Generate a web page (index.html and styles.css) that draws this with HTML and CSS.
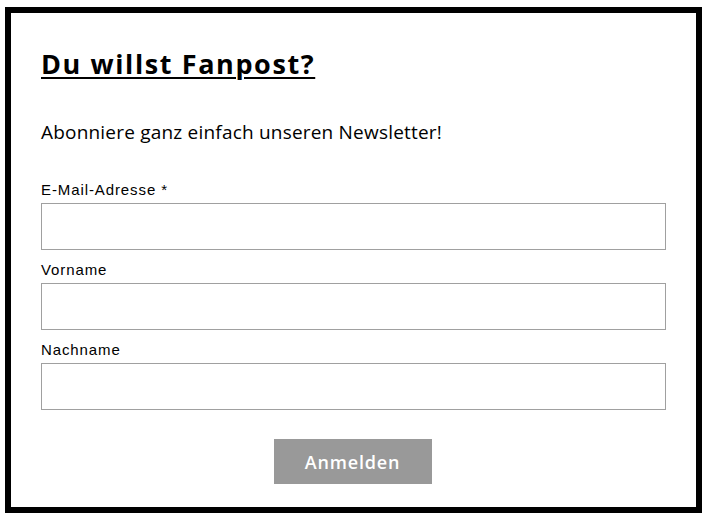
FILE: index.html
```html
<!DOCTYPE html>
<html lang="de">
<head>
<meta charset="utf-8">
<link rel="stylesheet" href="styles.css">
</head>
<body>
<div class="box">
  <h2 class="title">Du willst Fanpost?</h2>
  <p class="intro">Abonniere ganz einfach unseren Newsletter!</p>
  <form class="form">
    <label class="field">
      <span class="label">E-Mail-Adresse *</span>
      <input class="input" type="email">
    </label>
    <label class="field">
      <span class="label">Vorname</span>
      <input class="input" type="text">
    </label>
    <label class="field">
      <span class="label">Nachname</span>
      <input class="input" type="text">
    </label>
    <div class="actions">
      <button class="button" type="button">Anmelden</button>
    </div>
  </form>
</div>
</body>
</html>
```

FILE: styles.css
```css
* { box-sizing: border-box; }
html, body { margin: 0; padding: 0; background: #fff; }
body { font-family: "Open Sans", "Noto Sans", sans-serif; color: #000; }
.box {
  margin: 7px 6px 0 5px;
  width: 697px;
  height: 506px;
  border: 6px solid #000;
  padding: 33px 30px 0 30px;
}
.title {
  margin: 0;
  font-size: 27px;
  line-height: 36px;
  font-weight: 700;
  text-decoration: underline;
  text-decoration-thickness: 2px;
  text-underline-offset: 3px;
  letter-spacing: 1.6px;
}
.intro {
  margin: 38px 0 0 0;
  font-size: 19px;
  line-height: 24px;
  letter-spacing: 0.2px;
}
.form { margin-top: 36px; display: flex; flex-direction: column; }
.field { display: flex; flex-direction: column; margin-bottom: 10px; }
.field:last-of-type { margin-bottom: 0; }
.label {
  font-family: "Liberation Sans", Arial, sans-serif;
  font-size: 15px;
  line-height: 20px;
  letter-spacing: 0.9px;
  margin-bottom: 3px;
}
.input {
  display: block;
  width: 100%;
  height: 47px;
  border: 1px solid #a0a0a0;
  margin: 0;
  padding: 0 10px;
  background: #fff;
}
.actions { display: flex; justify-content: center; margin-top: 29px; }
.button {
  width: 158px;
  height: 45px;
  border: 0;
  margin-left: -2px;
  background: #999;
  color: #fff;
  font-family: "Open Sans", sans-serif;
  font-weight: 600;
  font-size: 18px;
  letter-spacing: 0.8px;
}
```
